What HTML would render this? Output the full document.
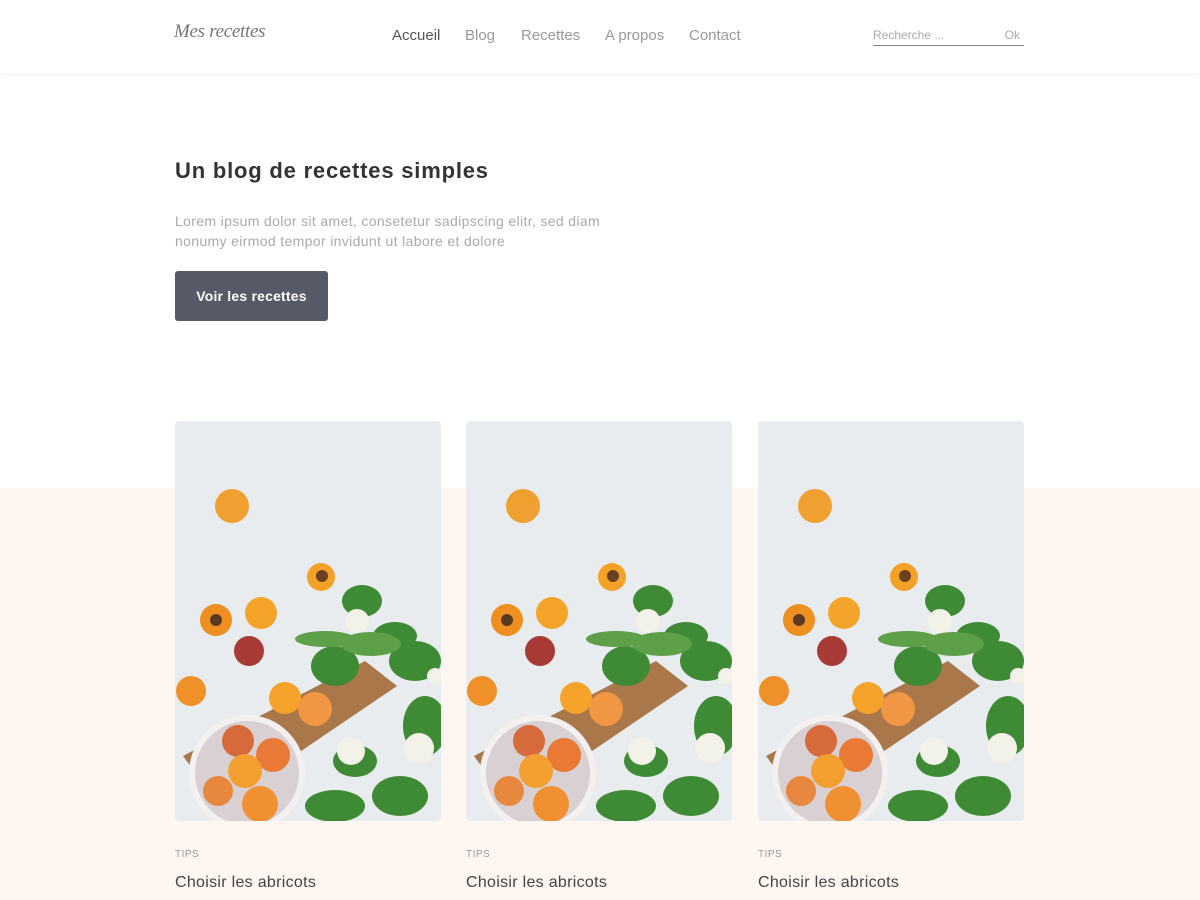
<!DOCTYPE html>
<html><head><meta charset="utf-8"><style>
*{margin:0;padding:0;box-sizing:border-box}
body{width:1200px;height:900px;overflow:hidden;background:#fff;font-family:"Liberation Sans",sans-serif;position:relative}
.hdr{position:absolute;top:0;left:0;width:1200px;height:73px;background:#fff;box-shadow:0 2px 6px rgba(0,0,0,.06);z-index:2}
.logo{position:absolute;left:174px;top:21px;font-family:"Liberation Serif",serif;font-style:italic;font-size:19px;color:#777;letter-spacing:-.3px}
.nav{position:absolute;top:27px;font-size:15px;color:#999}
.search{position:absolute;left:873px;top:28px;width:151px;height:18px;border-bottom:1px solid #888;font-size:12px;color:#aaa}
.beige{position:absolute;top:488px;left:0;width:1200px;height:412px;background:#fef6f1}
h1{position:absolute;left:175px;top:158px;font-size:22px;font-weight:bold;color:#333;letter-spacing:.8px}
.lead{position:absolute;left:175px;top:211px;font-size:14px;line-height:20px;color:#aaa;letter-spacing:.35px}
.btn{position:absolute;left:175px;top:271px;width:153px;height:50px;background:#555a66;border-radius:3px;color:#fff;font-size:14px;font-weight:bold;text-align:center;line-height:50px;letter-spacing:.2px}
.card{position:absolute;top:421px;width:266px}
.card svg{display:block;border-radius:4px}
.tag{margin-top:28px;font-size:10px;color:#999;letter-spacing:.5px}
.ttl{margin-top:14px;font-size:16px;color:#444;letter-spacing:.3px}
</style></head><body>
<div class="hdr">
<div class="logo">Mes recettes</div>
<div class="nav" style="left:392px;color:#555">Accueil</div>
<div class="nav" style="left:465px">Blog</div>
<div class="nav" style="left:521px">Recettes</div>
<div class="nav" style="left:605px">A propos</div>
<div class="nav" style="left:689px">Contact</div>
<div class="search"><span>Recherche ...</span><span style="position:absolute;right:4px">Ok</span></div>
</div>
<div class="beige"></div>
<h1>Un blog de recettes simples</h1>
<div class="lead">Lorem ipsum dolor sit amet, consetetur sadipscing elitr, sed diam<br>nonumy eirmod tempor invidunt ut labore et dolore</div>
<div class="btn">Voir les recettes</div>
<svg width="0" height="0" style="position:absolute"><defs>
<g id="img">
<rect width="266" height="400" fill="#e9ecef"/>
<circle cx="57" cy="85" r="17" fill="#f0a030"/>
<circle cx="146" cy="156" r="14" fill="#f4a127"/><circle cx="147" cy="155" r="6" fill="#6b4022"/>
<circle cx="41" cy="199" r="16" fill="#ef8f20"/><circle cx="41" cy="199" r="6" fill="#5a3a20"/>
<circle cx="86" cy="192" r="16" fill="#f5a42a"/>
<circle cx="74" cy="230" r="15" fill="#a83a35"/>
<circle cx="16" cy="270" r="15" fill="#f09028"/>
<polygon points="8,335 190,240 222,265 45,385" fill="#a9774a"/>
<circle cx="110" cy="277" r="16" fill="#f5a32b"/><circle cx="140" cy="288" r="17" fill="#f19642"/>
<circle cx="72" cy="352" r="58" fill="#f4f0f0"/><circle cx="72" cy="352" r="52" fill="#d8d0d2"/>
<circle cx="63" cy="320" r="16" fill="#d66a3a"/><circle cx="98" cy="334" r="17" fill="#e97a35"/>
<circle cx="70" cy="350" r="17" fill="#f4a030"/><circle cx="43" cy="370" r="15" fill="#e8883f"/><circle cx="85" cy="383" r="18" fill="#f09030"/>
<g fill="#3e8a35">
<ellipse cx="187" cy="180" rx="20" ry="16"/><ellipse cx="220" cy="215" rx="22" ry="14"/>
<ellipse cx="160" cy="245" rx="24" ry="20"/><ellipse cx="240" cy="240" rx="26" ry="20"/>
<ellipse cx="250" cy="305" rx="22" ry="30"/><ellipse cx="180" cy="340" rx="22" ry="16"/>
<ellipse cx="160" cy="385" rx="30" ry="16"/><ellipse cx="225" cy="375" rx="28" ry="20"/>
<ellipse cx="150" cy="218" rx="30" ry="8" fill="#5ea04a"/><ellipse cx="196" cy="223" rx="30" ry="12" fill="#5ea04a"/>
</g>
<g fill="#f2f2e8"><circle cx="182" cy="200" r="12"/><circle cx="176" cy="330" r="14"/><circle cx="244" cy="327" r="15"/><circle cx="260" cy="255" r="8"/></g>
</g></defs></svg>
<div class="card" style="left:175px"><svg width="266" height="400"><use href="#img"/></svg><div class="tag">TIPS</div><div class="ttl">Choisir les abricots</div></div>
<div class="card" style="left:466px"><svg width="266" height="400"><use href="#img"/></svg><div class="tag">TIPS</div><div class="ttl">Choisir les abricots</div></div>
<div class="card" style="left:758px"><svg width="266" height="400"><use href="#img"/></svg><div class="tag">TIPS</div><div class="ttl">Choisir les abricots</div></div>
</body></html>
